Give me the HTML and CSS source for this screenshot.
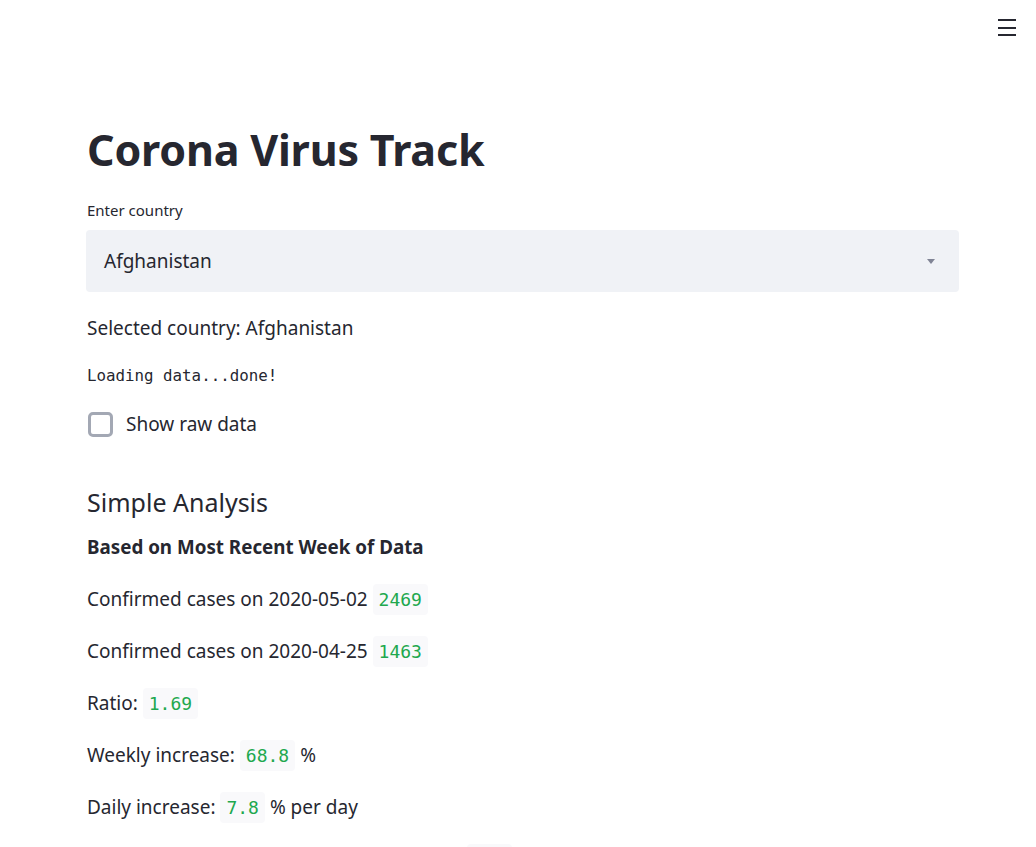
FILE: index.html
```html
<!DOCTYPE html>
<html lang="en">
<head>
<meta charset="utf-8">
<title>Corona Virus Track</title>
<link rel="stylesheet" href="styles.css">
</head>
<body>
<button class="menu" aria-label="Main menu"><span></span><span></span><span></span></button>
<main class="main">
  <h1 class="title">Corona Virus Track</h1>
  <label class="field-label">Enter country</label>
  <div class="select">
    <span class="select-value">Afghanistan</span>
    <span class="select-arrow"></span>
  </div>
  <p class="text first">Selected country: Afghanistan</p>
  <pre class="mono">Loading data...done!</pre>
  <div class="check-row">
    <span class="check-box"></span>
    <span class="check-label">Show raw data</span>
  </div>
  <h3 class="subhead">Simple Analysis</h3>
  <p class="text bold">Based on Most Recent Week of Data</p>
  <p class="text row">Confirmed cases on 2020-05-02 <code>2469</code></p>
  <p class="text row">Confirmed cases on 2020-04-25 <code>1463</code></p>
  <p class="text row">Ratio: <code>1.69</code></p>
  <p class="text row">Weekly increase: <code>68.8</code> %</p>
  <p class="text row">Daily increase: <code>7.8</code> % per day</p>
  <p class="text row last">Doubling time at the current growth rate: <code>9.2</code> days</p>
</main>
</body>
</html>
```

FILE: styles.css
```css
html, body {
  margin: 0;
  padding: 0;
  background: #ffffff;
  color: #262730;
  font-family: "Noto Sans", "Open Sans", sans-serif;
  overflow: hidden;
}

.menu {
  position: absolute;
  top: 19px;
  right: 20px;
  width: 18px;
  height: 17px;
  padding: 0;
  border: 0;
  background: transparent;
  display: flex;
  flex-direction: column;
  justify-content: space-between;
}
.menu span {
  display: block;
  height: 2px;
  background: #262730;
}

.main {
  width: 872px;
  padding: 0 0 0 87px;
  display: flex;
  flex-direction: column;
  align-items: flex-start;
}

.title {
  margin: 120px 0 0;
  font-size: 43px;
  line-height: 60px;
  font-weight: 700;
  letter-spacing: -0.2px;
}

.field-label {
  margin-top: 20px;
  font-size: 15px;
  line-height: 20px;
}

.select {
  margin-top: 10px;
  width: 873px;
  margin-left: -1px;
  height: 62px;
  box-sizing: border-box;
  background: #f0f2f6;
  border-radius: 4px;
  display: flex;
  align-items: center;
  justify-content: space-between;
  padding: 0 24px 0 18px;
}
.select-value {
  font-size: 19px;
}
.select-arrow {
  width: 0;
  height: 0;
  border-left: 4.5px solid transparent;
  border-right: 4.5px solid transparent;
  border-top: 5px solid #808495;
}

.text {
  margin: 0;
  font-size: 19px;
  line-height: 28px;
  height: 28px;
}
.first { margin-top: 22px; }

.mono {
  margin: 22px 0 0;
  font-family: "DejaVu Sans Mono", monospace;
  font-size: 15.8px;
  line-height: 24px;
}

.check-row {
  margin-top: 22px;
  height: 28px;
  display: flex;
  align-items: center;
  gap: 13px;
}
.check-box {
  width: 25px;
  height: 25px;
  box-sizing: border-box;
  border: 3px solid #a3a8b4;
  border-radius: 5px;
  margin-left: 1px;
}
.check-label {
  font-size: 19px;
}

.subhead {
  margin: 46px 0 0;
  font-size: 25px;
  line-height: 36px;
  font-weight: 400;
}

.bold {
  margin-top: 13px;
  font-weight: 700;
  font-size: 18.8px;
}

.row { margin-top: 24px; }
.last { letter-spacing: 0.15px; }

code {
  font-family: "DejaVu Sans Mono", monospace;
  font-size: 18px;
  line-height: 1;
  letter-spacing: 0;
  color: #21a84e;
  background: #f9f9fb;
  border-radius: 4px;
  padding: 5px 6px;
}
```
